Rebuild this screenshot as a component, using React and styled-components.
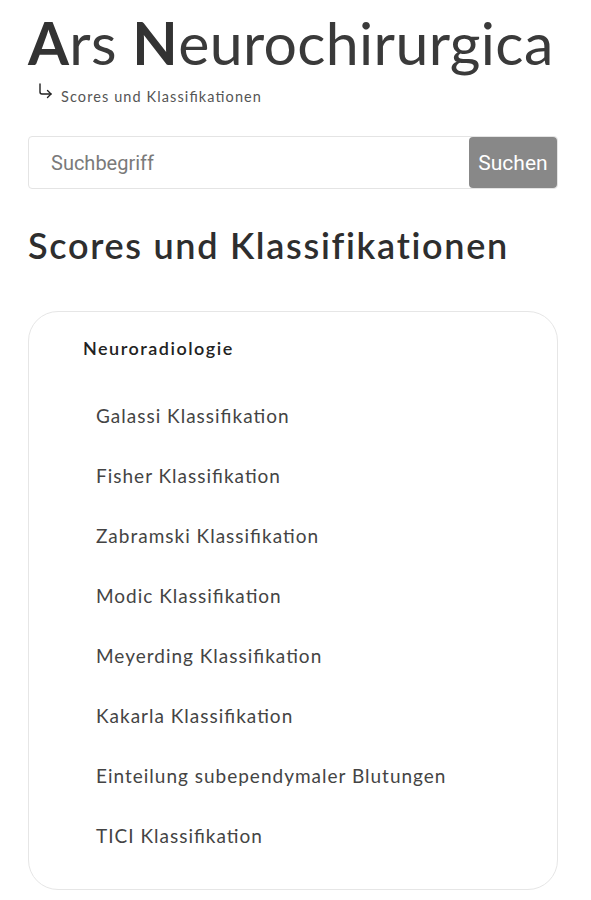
import styled, { createGlobalStyle } from "styled-components";

const GlobalStyle = createGlobalStyle`
  body {
    margin: 0;
    background: #ffffff;
    font-family: "Lato", "Noto Sans", sans-serif;
    color: #333;
  }
`;

const items = [
  "Galassi Klassifikation",
  "Fisher Klassifikation",
  "Zabramski Klassifikation",
  "Modic Klassifikation",
  "Meyerding Klassifikation",
  "Kakarla Klassifikation",
  "Einteilung subependymaler Blutungen",
  "TICI Klassifikation",
];

function App() {
  return (
    <>
      <GlobalStyle />
      <Page>
        <Header>
          <Title>
            <Initial>A</Initial>rs <Initial>N</Initial>eurochirurgica
          </Title>
          <Breadcrumb>
            <ArrowIcon viewBox="0 0 16 16" aria-hidden="true">
              <path d="M3 1 V9 Q3 11 5 11 H14" />
              <path d="M10.5 7.5 L14 11 L10.5 14.5" />
            </ArrowIcon>
            <span>Scores und Klassifikationen</span>
          </Breadcrumb>
        </Header>
        <SearchForm onSubmit={(e) => e.preventDefault()}>
          <SearchInput placeholder="Suchbegriff" />
          <SearchButton type="submit">Suchen</SearchButton>
        </SearchForm>
        <PageHeading>Scores und Klassifikationen</PageHeading>
        <Card>
          <CategoryTitle>Neuroradiologie</CategoryTitle>
          <ItemList>
            {items.map((item) => (
              <Item key={item}>{item}</Item>
            ))}
          </ItemList>
        </Card>
      </Page>
    </>
  );
}

export default App;

const Page = styled.div`
  display: flex;
  flex-direction: column;
  padding: 11px 33px 10px 28px;
`;

const Header = styled.header`
  display: flex;
  flex-direction: column;
`;

const Title = styled.h1`
  margin: 0;
  font-family: "Lato", sans-serif;
  font-weight: 400;
  font-size: 59px;
  line-height: 64px;
  letter-spacing: 0.35px;
  color: #3a3a3a;
`;

const Initial = styled.span`
  font-weight: 700;
  color: #333;
`;

const Breadcrumb = styled.div`
  display: flex;
  align-items: flex-start;
  gap: 8px;
  padding-left: 9px;
  margin-top: 12px;
  font-size: 14.5px;
  line-height: 20px;
  letter-spacing: 1.1px;
  font-feature-settings: "liga" 1;
  color: #555;
`;

const ArrowIcon = styled.svg`
  width: 16px;
  height: 16px;
  margin-top: -4px;
  fill: none;
  stroke: #222;
  stroke-width: 1.4;
  stroke-linecap: round;
  stroke-linejoin: round;
`;

const SearchForm = styled.form`
  display: flex;
  margin-top: 29px;
  height: 53px;
  box-sizing: border-box;
  border: 1px solid #e4e4e4;
  border-radius: 4px;
`;

const SearchInput = styled.input`
  flex: 1;
  border: none;
  outline: none;
  padding: 0 22px;
  font-family: "Roboto", "Liberation Sans", sans-serif;
  font-size: 20px;
  background: transparent;
  &::placeholder {
    color: #7a7a7a;
  }
`;

const SearchButton = styled.button`
  width: 88px;
  border: none;
  border-radius: 4px;
  background: #888888;
  color: #fff;
  font-family: "Roboto", "Liberation Sans", sans-serif;
  font-size: 21px;
  padding: 0;
`;

const PageHeading = styled.h2`
  margin: 34px 0 0;
  font-family: "Lato", sans-serif;
  font-weight: 600;
  font-size: 36px;
  line-height: 44px;
  letter-spacing: 1.7px;
  color: #2e2e2e;
`;

const Card = styled.section`
  margin-top: 44px;
  border: 1px solid #e6e6e6;
  border-radius: 30px;
  padding: 24px 40px 41px 54px;
`;

const CategoryTitle = styled.h3`
  margin: 0;
  font-size: 18px;
  font-weight: 600;
  line-height: 24px;
  letter-spacing: 1.5px;
  color: #222;
`;

const ItemList = styled.ul`
  list-style: none;
  margin: 44px 0 0;
  padding: 0 0 0 13px;
  display: flex;
  flex-direction: column;
  gap: 36px;
`;

const Item = styled.li`
  font-size: 19px;
  line-height: 24px;
  letter-spacing: 1px;
  font-feature-settings: "liga" 1;
  color: #444;
`;
